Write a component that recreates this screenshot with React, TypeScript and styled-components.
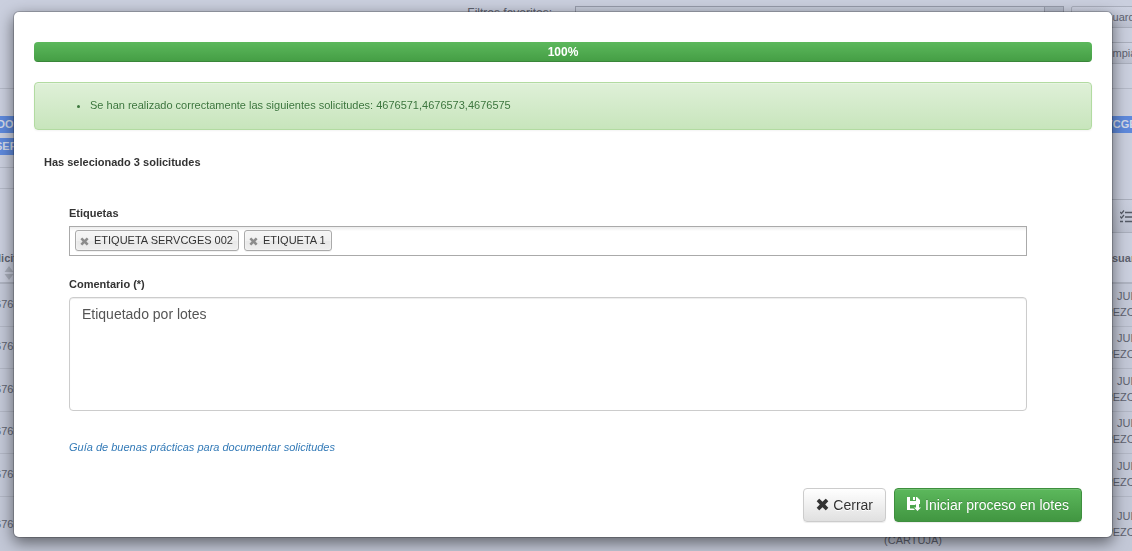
import React, { useState } from "react";
import styled, { createGlobalStyle, css } from "styled-components";

const GlobalStyle = createGlobalStyle`
  *, *::before, *::after { box-sizing: border-box; }
  html, body, #root { height: 100%; }
  body {
    margin: 0;
    overflow: hidden;
    background: #cacfde;
    color: #333;
    font-family: "Liberation Sans", Arial, sans-serif;
    font-size: 11px;
    line-height: 16px;
  }
`;

/* ---------- page under the dialog ---------- */

const Page = styled.div`
  height: 100%;
  overflow: hidden;
  color: #5f6370;
`;

const Filters = styled.form`
  display: grid;
  grid-template-columns: 1fr 489px 92px;
  gap: 14px 7px;
  margin-right: -31px;
  padding: 6px 0 24px;
  border-bottom: 1px solid #b4b9c7;
`;

const FilterLabel = styled.label`
  text-align: right;
  font-size: 12px;
  line-height: 14px;
  padding-right: 16px;
`;

const FilterSelect = styled.select`
  appearance: none;
  height: 22px;
  border: 1px solid #979cab;
  border-radius: 0;
  background: linear-gradient(to left, #b7bdcc 18px, #979cab 18px, #979cab 19px, #c6cbda 19px);
`;

const FilterButton = styled.button`
  grid-column: 3;
  height: 22px;
  padding: 0 0 0 32px;
  border: 1px solid #a9aebc;
  border-radius: 2px;
  background: linear-gradient(#cdd2e1, #bbc0cf);
  color: #5f6370;
  font: inherit;
  text-align: left;
`;

const Summary = styled.div`
  display: flex;
  justify-content: space-between;
  height: 144px;
`;

const TagPanel = styled.div`
  height: 79px;
  padding-top: 27px;
  border-bottom: 1px solid #b4b9c7;
`;

const TagColumn = styled.div`
  flex: 1;
  height: 100px;
  border-bottom: 1px solid #b4b9c7;
`;

const SideColumn = styled.div`
  display: flex;
  flex-direction: column;
  justify-content: space-between;
  width: 60px;
  padding-top: 27px;
`;

const Tag = styled.span<{ $shift: number }>`
  display: block;
  width: 90px;
  margin: 0 0 5px ${(p) => p.$shift}px;
  background: #5e89dc;
  color: #d3d9e8;
  font-weight: bold;
  line-height: 17px;
`;

const Toolbar = styled.div`
  display: flex;
  align-items: center;
  height: 34px;
  padding-left: 48px;
  border: solid #a9aebc;
  border-width: 1px 0;
  background: linear-gradient(#cacfde, #bdc2d1);
  svg { flex: none; }
`;

const Results = styled.table`
  width: calc(100% + 52px);
  margin-left: -20px;
  border-collapse: separate;
  border-spacing: 0;
  table-layout: fixed;

  th {
    height: 51px;
    padding: 17px 0 0 4px;
    border-bottom: 2px solid #aeb3c1;
    text-align: left;
    vertical-align: top;
  }
  th svg { display: block; margin-left: 20px; }
  td {
    height: 42px;
    padding: 3px 0 6px;
    border-bottom: 1px solid #b2b7c5;
    background: #c3c8d7;
    text-align: center;
    white-space: nowrap;
  }
  tr:nth-child(odd) td { height: 43px; }
  td:first-child { padding-left: 9px; text-align: left; }
`;

/* ---------- dialog ---------- */

const Overlay = styled.div`
  position: fixed;
  inset: 0;
  padding: 11px 19px 13px 13px;
`;

const Dialog = styled.section`
  padding: 30px 20px 15px;
  border: 1px solid rgba(0, 0, 0, 0.2);
  border-radius: 6px;
  background: #fff;
  background-clip: padding-box;
  box-shadow: 0 5px 15px rgba(0, 0, 0, 0.5);
`;

const Progress = styled.div`
  height: 20px;
  margin-bottom: 20px;
  overflow: hidden;
  border-radius: 4px;
  background: #ebebeb;
`;

const ProgressBar = styled.div`
  height: 100%;
  background: linear-gradient(#5cb85c, #449d44);
  box-shadow: inset 0 -1px 0 rgba(0, 0, 0, 0.15);
  color: #fff;
  font-size: 12px;
  font-weight: bold;
  line-height: 20px;
  text-align: center;
`;

const SuccessAlert = styled.div`
  padding: 14px 15px 16px;
  border: 1px solid #b2dba1;
  border-radius: 4px;
  background: linear-gradient(#dff0d8, #c8e5bc);
  box-shadow: inset 0 1px 0 rgba(255, 255, 255, 0.25), 0 1px 2px rgba(0, 0, 0, 0.05);
  color: #3c763d;
  text-shadow: 0 1px 0 rgba(255, 255, 255, 0.2);
  ul { margin: 0; padding-left: 40px; }
`;

const Selected = styled.p`
  margin: 24px 10px 35px;
  font-weight: bold;
`;

const Fields = styled.form`
  padding: 0 65px 0 35px;
`;

const FieldLabel = styled.label`
  display: block;
  margin-bottom: 5px;
  font-weight: bold;
`;

const TagBox = styled.div`
  display: flex;
  gap: 5px;
  height: 30px;
  margin-bottom: 20px;
  padding: 3px 5px;
  border: 1px solid #aaa;
  background: linear-gradient(#eee 1%, #fff 15%);
`;

const Chip = styled.span`
  display: flex;
  align-items: center;
  height: 21px;
  padding: 0 5px 2px 4px;
  border: 1px solid #aaa;
  border-radius: 3px;
  background: linear-gradient(#f4f4f4 20%, #f0f0f0 50%, #e8e8e8 52%, #eee 100%);
  box-shadow: 0 0 2px #fff inset, 0 1px 0 rgba(0, 0, 0, 0.05);
`;

const ChipRemove = styled.button`
  display: flex;
  width: 14px;
  padding: 4px 0 0;
  border: 0;
  background: none;
  color: #8c8c8c;
`;

const TagInput = styled.input`
  flex: 1;
  min-width: 10px;
  padding: 0;
  border: 0;
  outline: 0;
  background: transparent;
  font: inherit;
`;

const Comment = styled.textarea`
  display: block;
  width: 100%;
  height: 114px;
  margin-bottom: 28px;
  padding: 6px 12px;
  border: 1px solid #ccc;
  border-radius: 4px;
  box-shadow: inset 0 1px 1px rgba(0, 0, 0, 0.075);
  color: #555;
  font-family: inherit;
  font-size: 14px;
  line-height: 20px;
  resize: none;
`;

const GuideLink = styled.a`
  color: #337ab7;
  font-style: italic;
  text-decoration: none;
`;

const Footer = styled.footer`
  display: flex;
  justify-content: flex-end;
  gap: 8px;
  padding: 33px 10px 0;
`;

const Button = styled.button<{ $primary?: boolean }>`
  display: flex;
  align-items: center;
  gap: 4px;
  height: 34px;
  padding: 0 12px;
  border: 1px solid #ccc;
  border-radius: 4px;
  background: linear-gradient(#fff, #e0e0e0);
  box-shadow: inset 0 1px 0 rgba(255, 255, 255, 0.15), 0 1px 1px rgba(0, 0, 0, 0.075);
  color: #333;
  font-family: inherit;
  font-size: 14px;
  text-shadow: 0 1px 0 #fff;
  svg { margin-bottom: 2px; }
  ${(p) =>
    p.$primary &&
    css`
      border-color: #3e8f3e;
      background: linear-gradient(#5cb85c, #419641);
      color: #fff;
      text-shadow: 0 -1px 0 rgba(0, 0, 0, 0.2);
    `}
`;

const Cross = ({ size }: { size: number }) => (
  <svg width={size} height={size} viewBox="0 0 14 14" fill="currentColor" aria-hidden="true">
    <path d="M3.900 1L7 4.100 10.100 1q.4-.4.8 0L13 3.100q.4.4 0 .8L9.900 7l3.100 3.100q.4.4 0 .8L10.900 13q-.4.4-.8 0L7 9.900 3.900 13q-.4.4-.8 0L1 10.900q-.4-.4 0-.8L4.100 7 1 3.900q-.4-.4 0-.8L3.100 1q.4-.4.8 0z" />
  </svg>
);

const FloppySave = () => (
  <svg width="14" height="14" viewBox="0 0 14 14" fill="currentColor" aria-hidden="true">
    <path d="M0 0h3v4h6V0h1l3 3v4H8.500v1H3v5H0z" />
    <path d="M6 0h2v3H6z" />
    <path d="M3 11.500h3.500l1.500 1.500H3z" />
    <path d="M9 7h3v3.500h2L10.500 14 7 10.500h2z" />
  </svg>
);

const Checklist = () => (
  <svg width="18" height="13" viewBox="0 0 18 13" fill="none" stroke="#555a66" aria-hidden="true">
    <path d="M0 2l1.500 1.500L4 .5M0 6.500l1.500 1.500L4 5" strokeWidth="1.2" />
    <path d="M5 2.500h13M5 7h13M5 11.500h13M0 11.500h3" strokeWidth="1.6" />
  </svg>
);

const SortArrows = () => (
  <svg width="10" height="14" viewBox="0 0 10 14" fill="#a9aebb" aria-hidden="true">
    <path d="M5 0l4.500 6h-9zM5 14l4.500-6h-9z" />
  </svg>
);

const requests = ["4676571", "4676573", "4676575", "4676577", "4676579", "4676581"];

export default function App() {
  const [tags, setTags] = useState(["ETIQUETA SERVCGES 002", "ETIQUETA 1"]);

  return (
    <>
      <GlobalStyle />
      <Page inert>
        <Filters>
          <FilterLabel htmlFor="favoritos">Filtros favoritos:</FilterLabel>
          <FilterSelect id="favoritos" />
          <FilterButton type="button">Guardar</FilterButton>
          <FilterButton type="button">Limpiar</FilterButton>
        </Filters>
        <Summary>
          <TagColumn>
            <TagPanel>
              <Tag $shift={-18}>TODOS</Tag>
              <Tag $shift={-5}>SERVCGES</Tag>
            </TagPanel>
          </TagColumn>
          <SideColumn>
            <Tag $shift={11}>SERVCGES</Tag>
            <Toolbar>
              <Checklist />
            </Toolbar>
          </SideColumn>
        </Summary>
        <Results>
          <colgroup>
            <col />
            <col width="150" />
            <col width="112" />
            <col width="64" />
          </colgroup>
          <thead>
            <tr>
              <th>
                Solicitud
                <SortArrows />
              </th>
              <th />
              <th />
              <th>Usuario</th>
            </tr>
          </thead>
          <tbody>
            {requests.map((id, i) => (
              <tr key={id}>
                <td>{id}</td>
                <td>
                  {i === requests.length - 1 && (
                    <>
                      <br />
                      <br />
                      (CARTUJA)
                    </>
                  )}
                </td>
                <td />
                <td>
                  JULIA
                  <br />
                  PEZCANO
                </td>
              </tr>
            ))}
          </tbody>
        </Results>
      </Page>

      <Overlay>
        <Dialog role="dialog" aria-modal="true" aria-label="Etiquetas">
          <Progress>
            <ProgressBar role="progressbar" aria-valuenow={100} style={{ width: "100%" }}>
              100%
            </ProgressBar>
          </Progress>
          <SuccessAlert role="alert">
            <ul>
              <li>Se han realizado correctamente las siguientes solicitudes: 4676571,4676573,4676575</li>
            </ul>
          </SuccessAlert>
          <Selected>Has selecionado 3 solicitudes</Selected>
          <Fields>
            <FieldLabel htmlFor="etiquetas">Etiquetas</FieldLabel>
            <TagBox>
              {tags.map((tag) => (
                <Chip key={tag}>
                  <ChipRemove
                    type="button"
                    aria-label={`Quitar ${tag}`}
                    onClick={() => setTags(tags.filter((t) => t !== tag))}
                  >
                    <Cross size={9} />
                  </ChipRemove>
                  {tag}
                </Chip>
              ))}
              <TagInput id="etiquetas" />
            </TagBox>
            <FieldLabel htmlFor="comentario">Comentario (*)</FieldLabel>
            <Comment id="comentario" defaultValue="Etiquetado por lotes" />
            <GuideLink href="#guia">Guía de buenas prácticas para documentar solicitudes</GuideLink>
          </Fields>
          <Footer>
            <Button type="button">
              <Cross size={13} />
              Cerrar
            </Button>
            <Button type="button" $primary>
              <FloppySave />
              Iniciar proceso en lotes
            </Button>
          </Footer>
        </Dialog>
      </Overlay>
    </>
  );
}
